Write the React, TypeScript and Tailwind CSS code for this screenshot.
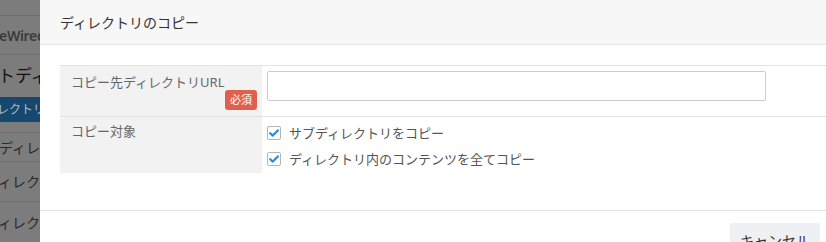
import React from "react";

const font = { fontFamily: '"Noto Sans", "Noto Sans CJK JP", sans-serif' };

function Check({ label }: { label: string }) {
  return (
    <label className="flex items-center gap-[8px] h-[14px] text-[13px] text-[#555] leading-none">
      <span className="w-[14px] h-[14px] rounded-[2px] border border-[#b5b5b5] bg-white flex items-center justify-center">
        <svg width="10" height="8" viewBox="0 0 10 8">
          <path d="M1.2 4.2 L3.8 6.6 L8.8 1.4" fill="none" stroke="#2a8bd8" strokeWidth="2.2" strokeLinecap="round" strokeLinejoin="round" />
        </svg>
      </span>
      <span>{label}</span>
    </label>
  );
}

export default function App() {
  return (
    <div className="w-[826px] h-[242px] flex overflow-hidden bg-white" style={font}>
      {/* dimmed background page */}
      <div className="w-[40px] shrink-0 flex flex-col bg-[#7c7c7c] overflow-hidden whitespace-nowrap">
        <div className="h-[16px] border-b border-[#6e6e6e]" />
        <div className="h-[39px] border-b border-[#6e6e6e] flex items-center">
          <span className="-ml-[1px] text-[14px] font-semibold tracking-[-0.3px] text-[#3a3a3a]">eWired</span>
        </div>
        <div className="h-[42px] flex items-center">
          <span className="-ml-[2px] text-[17px] text-[#111]">トディ</span>
        </div>
        <div className="h-[25px] bg-[#15486c] flex items-center">
          <span className="-ml-[3px] text-[12px] text-[#a9bccb]">レクトリ新</span>
        </div>
        <div className="h-[11px] border-b border-[#6e6e6e]" />
        <div className="h-[29px] border-b border-[#6e6e6e] flex items-center">
          <span className="-ml-[1px] text-[14px] text-[#2a2a2a]">ディレク</span>
        </div>
        <div className="h-[40px] border-b border-[#6e6e6e] flex items-center">
          <span className="-ml-[2px] text-[14px] text-[#2a2a2a]">ィレクト</span>
        </div>
        <div className="h-[40px] flex items-center">
          <span className="-ml-[2px] text-[14px] text-[#2a2a2a]">ィレクト</span>
        </div>
      </div>

      {/* modal */}
      <div className="flex-1 flex flex-col bg-white">
        <div className="h-[45px] shrink-0 bg-[#f7f7f7] border-b border-[#e5e5e5] pl-[20px] flex items-center text-[14px] text-[#333]">
          ディレクトリのコピー
        </div>
        <div className="pt-[20px] pl-[20px] h-[165px] shrink-0">
          <div className="border-t border-[#e3e3e3]">
            <div className="flex h-[51px] border-b border-[#e3e3e3]">
              <div className="w-[202px] shrink-0 bg-[#f2f2f2] relative pl-[11px] pt-[7px] text-[13px] text-[#666]">
                コピー先ディレクトリURL
                <span className="absolute right-[5px] top-[24px] h-[20px] px-[5px] rounded-[3px] bg-[#e0604e] text-white text-[11px] flex items-center">
                  必須
                </span>
              </div>
              <div className="pl-[5px] pt-[5px]">
                <div className="w-[499px] h-[30px] border border-[#cccccc] rounded-[2px] bg-white" />
              </div>
            </div>
            <div className="flex h-[56px]">
              <div className="w-[202px] shrink-0 bg-[#f2f2f2] pl-[11px] pt-[5px] text-[13px] text-[#666]">
                コピー対象
              </div>
              <div className="pl-[5px] pt-[9px] flex flex-col gap-[12px]">
                <Check label="サブディレクトリをコピー" />
                <Check label="ディレクトリ内のコンテンツを全てコピー" />
              </div>
            </div>
          </div>
        </div>
        <div className="flex-1 border-t border-[#e3e3e3] flex justify-end pr-[6px] pt-[12px]">
          <button className="w-[90px] h-[34px] bg-[#eef0f4] text-[14px] text-[#333] rounded-[2px]">
            キャンセル
          </button>
        </div>
      </div>
    </div>
  );
}
